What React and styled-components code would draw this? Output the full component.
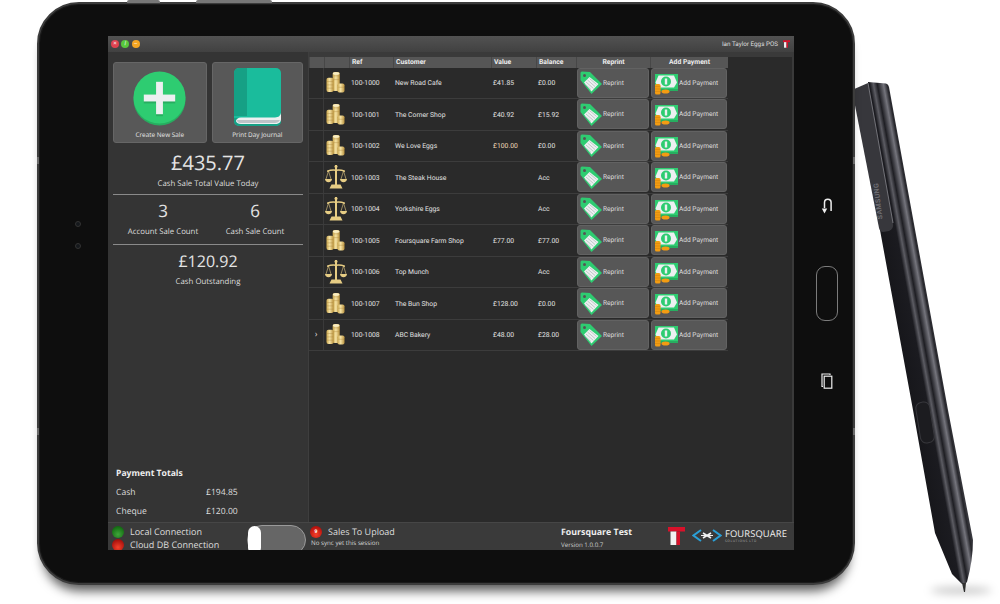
import React from "react";
import styled, { createGlobalStyle } from "styled-components";

const Global = createGlobalStyle`
  html, body { margin: 0; padding: 0; background: #fff; }
  * { box-sizing: border-box; }
  body { text-rendering: geometricPrecision; }
`;

const Page = styled.div`
  position: relative; width: 1000px; height: 604px; overflow: hidden; background: #fff;
  padding: 2px 0 0 37px;
`;
const Tablet = styled.div`
  position: relative; width: 818px; height: 583px; display: flex;
  background: #0e0e0e; border: 2px solid #3c3c3c; border-radius: 42px;
  box-shadow: 0 12px 11px -6px rgba(0,0,0,.65), inset 0 0 0 1px #1a1a1a;
  padding: 32px 0 33px 0;
`;
const TopKey = styled.div`
  position: absolute; top: -4px; left: ${p => p.$left}px; width: ${p => p.$w}px; height: 3px;
  background: #777; border-radius: 2px 2px 0 0;
`;
const EdgeNotch = styled.div`
  position: absolute; top: ${p => p.$top}px; ${p => p.$side}: -2px; width: 2px; height: 7px; background: #6a6a6a;
`;
const LeftBezel = styled.div`
  width: 69px; display: flex; flex-direction: column; align-items: center; gap: 16px; padding: 185px 0 0 9px;
`;
const Camera = styled.div`
  width: 6px; height: 6px; border-radius: 50%; background: #15181c; border: 1px solid #333;
`;
const RightBezel = styled.div`
  width: 59px; display: flex; flex-direction: column; align-items: center; padding: 162px 0 0 6px; color: #e8e8e8;
`;
const HomeKey = styled.div`
  width: 22px; height: 55px; margin: 52px 0 52px; border: 1.5px solid #7b7b7b; border-radius: 9px;
`;
const Screen = styled.div`
  width: 686px; height: 514px; display: flex; flex-direction: column; overflow: hidden; background: #333;
  font-family: "Open Sans", sans-serif; color: #e4e4e4;
`;
const TitleBar = styled.div`
  height: 16px; flex: none; display: flex; align-items: center; padding: 0 4px 0 3px;
  background: linear-gradient(#525252, #414141);
`;
const Light = styled.span`
  width: 8px; height: 8px; border-radius: 50%; margin-right: 2.3px; background: ${p => p.$c};
  display: flex; align-items: center; justify-content: center; font: 700 6px/8px "Liberation Sans", sans-serif; color: rgba(255,255,255,.75);
`;
const Owner = styled.span`
  margin-left: auto; font: 6.3px Roboto, sans-serif; color: #ddd; margin-right: 5px;
`;
const Main = styled.div`flex: 1; min-height: 0; display: flex;`;
const Side = styled.div`
  width: 201px; flex: none; display: flex; flex-direction: column; padding: 10px 0 0; background: #343434;
  border-right: 1px solid #3e3e3e; text-align: center;
`;
const Tiles = styled.div`display: flex; gap: 5px; padding: 0 5px 0 5px;`;
const Tile = styled.div`
  width: ${p => p.$w}px; height: 81px; display: flex; flex-direction: column; align-items: center; justify-content: flex-end;
  background: #585858; border: 1px solid #666; border-radius: 3px; padding-bottom: 3px;
  font-size: 6.4px; line-height: 9px; color: #e6e6e6;
  svg { margin-bottom: 4.5px; display: block; }
`;
const BigAmount = styled.div`
  font-size: ${p => p.$s}px; line-height: ${p => p.$s + 4}px; margin-top: ${p => p.$mt}px;
`;
const Caption = styled.div`font-size: 7.8px; line-height: 11px; margin-top: ${p => p.$mt}px; color: #ddd;`;
const Rule = styled.div`height: 1px; background: #8a8a8a; margin: ${p => p.$mt}px 5px 0 5px;`;
const Counts = styled.div`display: grid; grid-template-columns: 96px 88px; padding: 0 0 0 7px;`;
const Count = styled.div`
  font-size: 17px; line-height: 20px; padding-top: 6px;
  ${Caption} { margin-top: 6px; }
`;
const Totals = styled.div`margin-top: auto; text-align: left; padding: 0 0 5px 8px; font-size: 8.6px; color: #ddd;`;
const TotalsHead = styled.div`font-weight: 700; font-size: 8.6px; line-height: 12px; color: #eee; margin-bottom: 3px;`;
const TotalRow = styled.div`display: grid; grid-template-columns: 90px 1fr; line-height: 12px; margin-top: 7px;`;
const TableWrap = styled.div`flex: 1; display: flex; flex-direction: column; padding: 5px 2px 0 0; background: #3a3a3a;`;
const Table = styled.div`flex: 1; background: #2a2a2a; font-family: Roboto, sans-serif;`;
const Row = styled.div`
  display: grid; grid-template-columns: 15px 25px 44px 98px 45px 40px 74px 78px; width: 419px; align-items: center;
  height: 31.5px; border-bottom: 1px solid #3c3c3c; font-size: 6.8px; color: #e2e2e2;
`;
const Header = styled(Row)`
  height: 10.5px; background: #565656; border-bottom: 0; font-weight: 700; color: #eee; align-items: stretch; line-height: 10px;
`;
const HeadCell = styled.div`
  border-left: 1px solid #474747; padding-left: ${p => p.$center ? 0 : 2}px; text-align: ${p => p.$center ? "center" : "left"};
`;
const Cell = styled.div`padding: 0.5px 0 0 2px; white-space: nowrap; color: ${p => p.$c || "inherit"};`;
const Gutter = styled.div`
  height: 100%; border-right: 1px solid #3a3a3a; display: flex; align-items: center; justify-content: center; font-size: 9px; color: #ddd;
`;
const IconCell = styled.div`display: flex; align-items: center; justify-content: center; padding-right: 2px; svg { display: block; }`;
const RowButton = styled.div`
  height: 30px; margin-left: 1px; margin-right: 1px; display: flex; align-items: center; gap: 1px; padding-left: 2px;
  background: #575757; border: 1px solid #626262; border-radius: 3px; font-size: 6.6px; color: #ddd;
  svg { display: block; flex: none; }
`;
const Footer = styled.div`
  height: 28px; flex: none; display: flex; background: #3a3a3a; border-top: 1px solid #464646; overflow: hidden;
`;
const Status = styled.div`width: 139px; padding: 2px 0 0 4px; flex: none;`;
const StatusLine = styled.div`
  display: flex; align-items: center; gap: 6px; height: 13px; font-size: 9px; color: #ddd;
`;
const Dot = styled.span`
  width: 12px; height: 12px; border-radius: 50%; flex: none; display: flex; align-items: center; justify-content: center;
  background: radial-gradient(circle at 50% 70%, ${p => p.$a}, ${p => p.$b} 75%);
  font-size: 5px; color: #fff; font-weight: 700;
`;
const Toggle = styled.div`
  width: 59px; height: 30px; flex: none; margin-top: 2px; background: #666; border: 1px solid #9a9a9a; border-radius: 15px;
`;
const Knob = styled.div`width: 13px; height: 28px; background: #fff; border-radius: 7px;`;
const Upload = styled.div`width: 255px; flex: none; padding: 2px 0 0 4px;`;
const SyncNote = styled.div`font-size: 6.2px; line-height: 10px; padding-left: 1px; color: #d4d4d4;`;
const Brand = styled.div`width: 107px; flex: none; padding-top: 3px;`;
const BrandName = styled.div`font-weight: 700; font-size: 8.8px; line-height: 13px; color: #eee;`;
const Version = styled.div`font-size: 6.2px; line-height: 10px; margin-top: 1px; color: #ccc;`;
const Logos = styled.div`display: flex; align-items: center; gap: 7px; height: 22px; padding-top: 3px; svg { display: block; flex: none; }`;
const LogoMark = styled.div`display: flex; align-items: center;`;
const FourSquare = styled.div`margin-left: 3px; color: #f0f0f0; font-size: 9.4px; line-height: 10px; letter-spacing: .1px; white-space: nowrap;`;
const SubBrand = styled.div`font-size: 3.2px; line-height: 4px; letter-spacing: .6px; color: #aaa;`;
const Pen = styled.svg`position: absolute; left: 845px; top: 75px;`;
const Shade = styled.div`
  position: absolute; left: 930px; top: 587px; width: 62px; height: 7px; border-radius: 50%; background: rgba(0,0,0,.22); filter: blur(4px);
`;

const PlusIcon = () => (
  <svg width="53" height="55" viewBox="0 0 54 56">
    <circle cx="27" cy="29" r="26.5" fill="#27ae60" />
    <circle cx="27" cy="27" r="26.5" fill="#2ecc71" />
    <rect x="23.5" y="13" width="7" height="33" fill="#27ae60" />
    <rect x="11" y="26" width="32" height="7" fill="#27ae60" />
    <rect x="23.5" y="11" width="7" height="33" fill="#ecf0f1" />
    <rect x="11" y="24" width="32" height="7" fill="#ecf0f1" />
  </svg>
);
const BookIcon = () => (
  <svg width="47" height="58" viewBox="0 0 47 58">
    <rect x="0" y="0" width="47" height="58" rx="5" fill="#1abc9c" />
    <path d="M5 0H13V48H0V5a5 5 0 0 1 5-5z" fill="#16a085" />
    <path d="M0 50h47v3a5 5 0 0 1-5 5H5a5 5 0 0 1-5-5z" fill="#16a085" />
    <path d="M47 45c-1 3-2 4-6 4.500H7c-3 0-5 2-5 3.500s2 3 5 3h34c4 0 6-2 6-5z" fill="#ecf0f1" />
    <path d="M3 52h43c-1 2-3 3-5 3H6c-2 0-3-1-3-3z" fill="#bdc3c7" />
  </svg>
);
const Coins = () => (
  <svg width="19" height="21" viewBox="0 0 20 22">
    <defs>
      <linearGradient id="gold" x1="0" x2="1" y1="0" y2="0">
        <stop offset="0" stopColor="#c9a64e" /><stop offset=".45" stopColor="#f6e3a4" /><stop offset="1" stopColor="#b8903c" />
      </linearGradient>
    </defs>
    <rect x="7" y="0" width="7.500" height="20" rx="2" fill="url(#gold)" />
    <rect x="0.500" y="6" width="7.500" height="15" rx="2" fill="url(#gold)" />
    <rect x="12" y="12" width="7.500" height="9.500" rx="2" fill="url(#gold)" />
    <path d="M1 10h6.500M1 13.500h6.500M1 17h6.500M8 4h6M8 8h6M13 16h6" stroke="#a9843a" strokeWidth=".4" />
    <ellipse cx="10.700" cy="1.500" rx="3.500" ry="1.300" fill="#f9edc2" />
  </svg>
);
const Scales = () => (
  <svg width="22" height="24" viewBox="0 0 22 24">
    <g fill="#e7cd84">
      <rect x="10" y="0" width="2" height="20" />
      <path d="M2 5.500Q7 3.500 11 4.500 15 3.500 20 5.500V7Q15 5.200 11 6 7 5.200 2 7z" />
      <path d="M6.500 19.500h9l2 4H4.500z" />
      <path d="M0 14h7c0 2-1.500 3.200-3.500 3.200S0 16 0 14zM15 14h7c0 2-1.500 3.200-3.500 3.200S15 16 15 14z" />
      <circle cx="11" cy="1.500" r="1.500" />
    </g>
    <path d="M3.500 6L1 14M3.500 6L6 14M18.500 6L16 14M18.500 6L21 14" stroke="#e7cd84" strokeWidth=".6" fill="none" />
  </svg>
);
const Tag = () => (
  <svg width="22" height="23" viewBox="0 0 22 23">
    <path d="M.5 2Q.5 .5 2 .5L10 1 22 13 11.500 23 .5 9z" fill="#2ecc71" />
    <circle cx="4.500" cy="4.500" r="1.500" fill="#555" />
    <path d="M9.500 6L18.500 13 11.500 20.500 4 11.500z" fill="#ecf0f1" />
    <path d="M7.500 9l7.500 6.500M6 11l7.500 6.500M9.500 7.500l7 6M5 13l6 5.500" stroke="#b4bcbc" strokeWidth=".8" />
  </svg>
);
const Money = () => (
  <svg width="24" height="24" viewBox="0 -1 24 24">
    <rect x="1" y="4" width="23" height="15" fill="#27ae60" />
    <rect x="1" y="2" width="23" height="15" fill="#2ecc71" />
    <path d="M4.500 3.500h15.500l3 7-3 5H4.500l-3-5z" fill="#ecf0f1" />
    <circle cx="12" cy="9.500" r="5" fill="#2ecc71" />
    <rect x="10.800" y="6.500" width="2.400" height="6" fill="#ecf0f1" />
    <rect x="1" y="12" width="5.500" height="10.500" rx="1.500" fill="#f39c12" />
    <path d="M1 14.500h5.500M1 17h5.500M1 19.500h5.500" stroke="#d68910" strokeWidth=".7" />
    <ellipse cx="11.500" cy="19.500" rx="4" ry="2" fill="#f39c12" />
  </svg>
);
const TLogo = ({ w, h }) => (
  <svg width={w} height={h} viewBox="0 0 17 18">
    <rect x="0" y="0" width="17" height="4.500" fill="#d8112a" />
    <rect x="2.500" y="4.500" width="6" height="13.500" fill="#f2f2f2" />
    <rect x="8.500" y="4.500" width="3.500" height="13.500" fill="#d8112a" />
  </svg>
);
const DiamondLogo = () => (
  <svg width="30" height="13" viewBox="0 0 30 13">
    <path d="M9 1L1.500 6.500 9 12M21 1L28.500 6.500 21 12" fill="none" stroke="#2a9fd6" strokeWidth="2" />
    <path d="M11 4l8 5M19 4l-8 5" stroke="#f2f2f2" strokeWidth="1.600" />
    <path d="M9 6.500h12" stroke="#f2f2f2" strokeWidth="1" />
  </svg>
);
const BackIcon = () => (
  <svg width="12" height="16" viewBox="0 0 12 16" fill="none" stroke="#eee" strokeWidth="1.500">
    <path d="M3.500 10V4.500a3.300 3.300 0 0 1 6.600 0V13" />
    <path d="M.8 10.500h5.400L3.500 15.500z" fill="#eee" stroke="none" />
  </svg>
);
const RecentIcon = () => (
  <svg width="12" height="16" viewBox="0 0 12 16" fill="none" stroke="#eee" strokeWidth="1.200">
    <path d="M2 13.500H1V1h8v1" />
    <rect x="3.200" y="3.200" width="7.600" height="12" />
  </svg>
);

const rows = [
  ["coins", "100-1000", "New Road Cafe", "£41.85", "£0.00"],
  ["coins", "100-1001", "The Corner Shop", "£40.92", "£15.92"],
  ["coins", "100-1002", "We Love Eggs", "£100.00", "£0.00", "#f0d9b8"],
  ["scales", "100-1003", "The Steak House", "", "Acc"],
  ["scales", "100-1004", "Yorkshire Eggs", "", "Acc"],
  ["coins", "100-1005", "Foursquare Farm Shop", "£77.00", "£77.00"],
  ["scales", "100-1006", "Top Munch", "", "Acc"],
  ["coins", "100-1007", "The Bun Shop", "£128.00", "£0.00"],
  ["coins", "100-1008", "ABC Bakery", "£48.00", "£28.00"],
];

export default function App() {
  return (
    <Page>
      <Global />
      <Pen width="155" height="529" viewBox="845 75 155 529">
        <defs>
          <linearGradient id="penBody" gradientUnits="userSpaceOnUse" x1="880" y1="230" x2="917" y2="223.300">
            <stop offset="0" stopColor="#17171b" /><stop offset=".42" stopColor="#1b1b20" />
            <stop offset=".52" stopColor="#5c5c63" /><stop offset=".62" stopColor="#1e1e23" />
            <stop offset=".78" stopColor="#74747c" /><stop offset=".88" stopColor="#26262b" /><stop offset="1" stopColor="#4a4a50" />
          </linearGradient>
        </defs>
        <path d="M868 82L886 83.500Q888.500 84 889 87L948 410 973 540Q973 560 967 582L965 584H962L952 574 935 533 913 410 880 230 868 90z" fill="url(#penBody)" />
        <path d="M852 90L868 83 893 223Q894 229 889 231L883 232Q880 232 879 228z" fill="#37373c" />
        <path d="M868 83L893 223" stroke="#85858c" strokeWidth=".8" />
        <text x="0" y="0" transform="translate(882.500 219) rotate(-97)" fontFamily="Roboto, sans-serif" fontWeight="700" fontSize="7" letterSpacing=".4" fill="#6e6e73">SAMSUNG</text>
        <rect x="918" y="402" width="14" height="41" rx="6" transform="rotate(-9 925 422)" fill="#1c1c20" stroke="#38383d" />
        <path d="M962 583L966 583 965 592 964 592z" fill="#333" />
      </Pen>
      <Shade />
      <Tablet>
        <TopKey $left={88} $w={33} />
        <TopKey $left={157} $w={76} />
        <EdgeNotch $side="left" $top={153} />
        <EdgeNotch $side="left" $top={424} />
        <EdgeNotch $side="right" $top={153} />
        <EdgeNotch $side="right" $top={424} />
        <LeftBezel>
          <Camera />
          <Camera />
        </LeftBezel>
        <Screen>
          <TitleBar>
            <Light $c="#e0424f">×</Light>
            <Light $c="#58c63c">/</Light>
            <Light $c="#f5a623">–</Light>
            <Owner>Ian Taylor Eggs POS</Owner>
            <TLogo w={7} h={8} />
          </TitleBar>
          <Main>
            <Side>
              <Tiles>
                <Tile $w={94}><PlusIcon />Create New Sale</Tile>
                <Tile $w={92}><BookIcon />Print Day Journal</Tile>
              </Tiles>
              <BigAmount $s={20} $mt={8}>£435.77</BigAmount>
              <Caption $mt={4}>Cash Sale Total Value Today</Caption>
              <Rule $mt={4} />
              <Counts>
                <Count>3<Caption>Account Sale Count</Caption></Count>
                <Count>6<Caption>Cash Sale Count</Caption></Count>
              </Counts>
              <Rule $mt={6} />
              <BigAmount $s={16} $mt={6}>£120.92</BigAmount>
              <Caption $mt={6}>Cash Outstanding</Caption>
              <Totals>
                <TotalsHead>Payment Totals</TotalsHead>
                <TotalRow><span>Cash</span><span>£194.85</span></TotalRow>
                <TotalRow><span>Cheque</span><span>£120.00</span></TotalRow>
              </Totals>
            </Side>
            <TableWrap>
              <Table>
                <Header>
                  <HeadCell /><HeadCell />
                  <HeadCell>Ref</HeadCell>
                  <HeadCell>Customer</HeadCell>
                  <HeadCell>Value</HeadCell>
                  <HeadCell>Balance</HeadCell>
                  <HeadCell $center>Reprint</HeadCell>
                  <HeadCell $center>Add Payment</HeadCell>
                </Header>
                {rows.map((r, i) => (
                  <Row key={r[1]}>
                    <Gutter>{i === rows.length - 1 ? "›" : ""}</Gutter>
                    <IconCell>{r[0] === "coins" ? <Coins /> : <Scales />}</IconCell>
                    <Cell>{r[1]}</Cell>
                    <Cell>{r[2]}</Cell>
                    <Cell $c={r[5]}>{r[3]}</Cell>
                    <Cell>{r[4]}</Cell>
                    <RowButton><Tag />Reprint</RowButton>
                    <RowButton><Money />Add Payment</RowButton>
                  </Row>
                ))}
              </Table>
            </TableWrap>
          </Main>
          <Footer>
            <Status>
              <StatusLine><Dot $a="#3fa53a" $b="#136b12" />Local Connection</StatusLine>
              <StatusLine><Dot $a="#f5402a" $b="#a5100c" />Cloud DB Connection</StatusLine>
            </Status>
            <Toggle><Knob /></Toggle>
            <Upload>
              <StatusLine><Dot $a="#f5402a" $b="#b5100c">9</Dot>Sales To Upload</StatusLine>
              <SyncNote>No sync yet this session</SyncNote>
            </Upload>
            <Brand>
              <BrandName>Foursquare Test</BrandName>
              <Version>Version 1.0.0.7</Version>
            </Brand>
            <Logos>
              <TLogo w={17} h={18} />
              <LogoMark>
                <DiamondLogo />
                <FourSquare>FOURSQUARE<SubBrand>SOLUTIONS LTD</SubBrand></FourSquare>
              </LogoMark>
            </Logos>
          </Footer>
        </Screen>
        <RightBezel>
          <BackIcon />
          <HomeKey />
          <RecentIcon />
        </RightBezel>
      </Tablet>
    </Page>
  );
}
